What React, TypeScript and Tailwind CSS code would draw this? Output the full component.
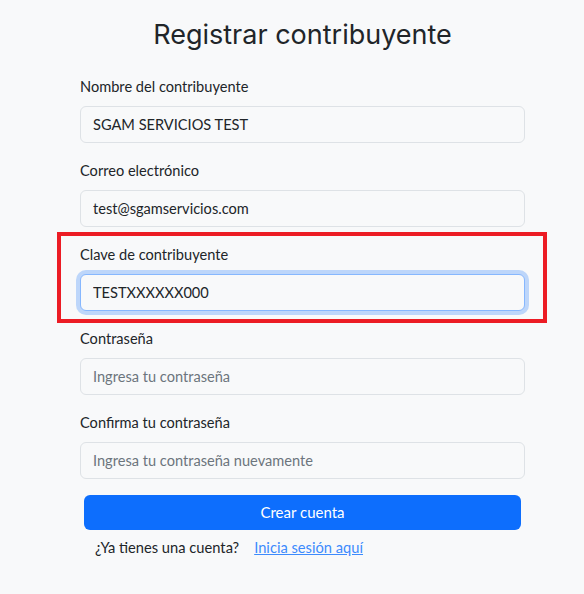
import React from 'react';

const Field = ({ label, value, placeholder, focused }: { label: string; value?: string; placeholder?: string; focused?: boolean }) => {
  return (
    <div className="relative mb-[17px]">
      {focused && (
        <div className="pointer-events-none absolute left-[-23px] top-[-12px] h-[91px] w-[490px] border-4 border-[#ec1c24]" />
      )}
      <label className="mb-[9px] block text-[14.6px] leading-[21px] text-[#212529]">{label}</label>
      <input
        defaultValue={value}
        placeholder={placeholder}
        className={
          focused
            ? 'block h-[37px] w-full rounded-md border border-[#86b7fe] bg-[#f8f9fa] px-3 text-[14.6px] text-[#212529] shadow-[0_0_0_4px_rgba(13,110,253,0.25)] outline-none'
            : 'block h-[37px] w-full rounded-md border border-[#dee2e6] bg-[#f8f9fa] px-3 text-[14.6px] text-[#212529] outline-none placeholder:text-[#6c757d]'
        }
      />
    </div>
  );
};

export default function App() {
  return (
    <div className="min-h-[594px] w-full bg-[#f8f9fa] font-['Lato',sans-serif]">
      <div className="ml-[80px] w-[445px] pt-[14px]">
        <h1 className="mb-[20px] text-center font-['Inter',sans-serif] text-[27px] leading-[42px] text-[#212529]">
          Registrar contribuyente
        </h1>
        <Field label="Nombre del contribuyente" value="SGAM SERVICIOS TEST" />
        <Field label="Correo electrónico" value="test@sgamservicios.com" />
        <Field label="Clave de contribuyente" value="TESTXXXXXX000" focused />
        <Field label="Contraseña" placeholder="Ingresa tu contraseña" />
        <Field label="Confirma tu contraseña" placeholder="Ingresa tu contraseña nuevamente" />
        <div className="mt-[-1px] px-[4px]">
          <button className="h-[35px] w-full rounded-md bg-[#0d6efd] text-[15px] text-white">Crear cuenta</button>
        </div>
        <p className="mt-[7px] pl-[15px] text-[14.7px] leading-[20px] text-[#212529]">
          ¿Ya tienes una cuenta?
          <a href="#" className="ml-[15px] text-[#3d8bfd] underline">Inicia sesión aquí</a>
        </p>
      </div>
    </div>
  );
}
